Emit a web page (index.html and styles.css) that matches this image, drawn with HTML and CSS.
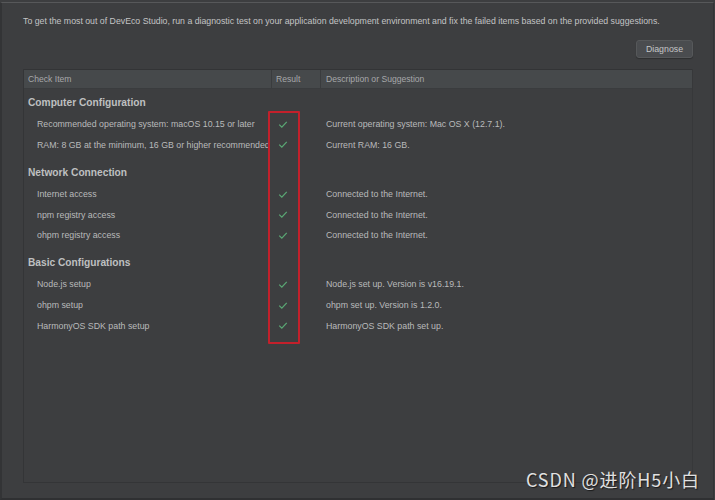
FILE: index.html
```html
<!DOCTYPE html>
<html>
<head>
<meta charset="utf-8">
<link rel="stylesheet" href="styles.css">
</head>
<body>
<div class="window">
  <p class="intro">To get the most out of DevEco Studio, run a diagnostic test on your application development environment and fix the failed items based on the provided suggestions.</p>
  <div class="toolbar"><button class="btn">Diagnose</button></div>
  <div class="table">
    <div class="thead">
      <div class="th">Check Item</div>
      <div class="th">Result</div>
      <div class="th">Description or Suggestion</div>
    </div>
    <div class="tbody">
      <div class="section">Computer Configuration</div>
      <div class="row"><div class="c1">Recommended operating system: macOS 10.15 or later</div><div class="c2"><svg class="chk" viewBox="0 0 12 10"><path d="M1.5 5.2 L4.6 8.2 L10.5 1.8"/></svg></div><div class="c3">Current operating system: Mac OS X (12.7.1).</div></div>
      <div class="row"><div class="c1">RAM: 8 GB at the minimum, 16 GB or higher recommended</div><div class="c2"><svg class="chk" viewBox="0 0 12 10"><path d="M1.5 5.2 L4.6 8.2 L10.5 1.8"/></svg></div><div class="c3">Current RAM: 16 GB.</div></div>
      <div class="section">Network Connection</div>
      <div class="row"><div class="c1">Internet access</div><div class="c2"><svg class="chk" viewBox="0 0 12 10"><path d="M1.5 5.2 L4.6 8.2 L10.5 1.8"/></svg></div><div class="c3">Connected to the Internet.</div></div>
      <div class="row"><div class="c1">npm registry access</div><div class="c2"><svg class="chk" viewBox="0 0 12 10"><path d="M1.5 5.2 L4.6 8.2 L10.5 1.8"/></svg></div><div class="c3">Connected to the Internet.</div></div>
      <div class="row"><div class="c1">ohpm registry access</div><div class="c2"><svg class="chk" viewBox="0 0 12 10"><path d="M1.5 5.2 L4.6 8.2 L10.5 1.8"/></svg></div><div class="c3">Connected to the Internet.</div></div>
      <div class="section">Basic Configurations</div>
      <div class="row"><div class="c1">Node.js setup</div><div class="c2"><svg class="chk" viewBox="0 0 12 10"><path d="M1.5 5.2 L4.6 8.2 L10.5 1.8"/></svg></div><div class="c3">Node.js set up. Version is v16.19.1.</div></div>
      <div class="row"><div class="c1">ohpm setup</div><div class="c2"><svg class="chk" viewBox="0 0 12 10"><path d="M1.5 5.2 L4.6 8.2 L10.5 1.8"/></svg></div><div class="c3">ohpm set up. Version is 1.2.0.</div></div>
      <div class="row"><div class="c1">HarmonyOS SDK path setup</div><div class="c2"><svg class="chk" viewBox="0 0 12 10"><path d="M1.5 5.2 L4.6 8.2 L10.5 1.8"/></svg></div><div class="c3">HarmonyOS SDK path set up.</div></div>
      <div class="highlight"></div>
    </div>
  </div>
  <div class="watermark">CSDN @进阶H5小白</div>
</div>
</body>
</html>
```

FILE: styles.css
```css
html, body {
  margin: 0;
  padding: 0;
  background: #3d3e40;
}
body {
  width: 715px;
  height: 500px;
  overflow: hidden;
  font-family: "Liberation Sans", Arial, sans-serif;
}
.window {
  position: relative;
  box-sizing: border-box;
  width: 714px;
  height: 498px;
  margin-top: 2px;
  border-top: 1px solid #57585a;
  border-left: 2px solid #333436;
  border-right: 1px solid #333436;
  border-bottom: 2px solid #2f3032;
  background: #3d3e40;
  padding: 0 20px 0 21px;
  display: flex;
  flex-direction: column;
}
.intro {
  margin: 12px 0 0 0;
  font-size: 8.75px;
  line-height: 12px;
  color: #c3c4c5;
  white-space: nowrap;
}
.toolbar {
  display: flex;
  justify-content: flex-end;
  margin-top: 13px;
}
.btn {
  box-sizing: border-box;
  width: 57px;
  height: 18px;
  padding: 0;
  border: 1px solid #56585a;
  border-radius: 3px;
  background: #4a4c4f;
  color: #c4c5c6;
  font-family: "Liberation Sans", Arial, sans-serif;
  font-size: 8.8px;
  box-shadow: 0 1px 1px rgba(0,0,0,0.25);
}
.table {
  margin-top: 11px;
  flex: 1;
  margin-bottom: 15px;
  display: flex;
  flex-direction: column;
  border-left: 1px solid #343537;
  border-right: 1px solid #37383a;
  border-bottom: 1px solid #343537;
}
.thead {
  display: grid;
  grid-template-columns: 248px 49px 1fr;
  height: 20px;
  background: #46494b;
  border-top: 1px solid #333436;
  border-bottom: 1px solid #3a3c3e;
  box-sizing: border-box;
}
.th {
  font-size: 8.6px;
  color: #a6a8aa;
  line-height: 19px;
  padding-left: 4px;
  border-right: 1px solid #3a3c3e;
  white-space: nowrap;
}
.th:last-child { border-right: none; padding-left: 5px; }
.tbody {
  position: relative;
  padding-top: 1px;
}
.section {
  font-size: 10.2px;
  font-weight: bold;
  color: #bfc0c1;
  height: 24px;
  line-height: 26px;
  padding-left: 4px;
}
.row {
  display: grid;
  grid-template-columns: 248px 49px 1fr;
  height: 20.6px;
  align-items: center;
  font-size: 8.8px;
  color: #b9babb;
}
.row + .section { margin-top: 4.6px; }
.c1 { padding-left: 13px; white-space: nowrap; }
.c2 { display: flex; padding-left: 6px; }
.c3 { padding-left: 5px; white-space: nowrap; }
.chk {
  width: 10px;
  height: 9px;
  fill: none;
  stroke: #5aa774;
  stroke-width: 1.5;
}
.highlight {
  position: absolute;
  left: 244px;
  top: 22px;
  width: 28px;
  height: 229px;
  border: 2px solid #c3202b;
  border-radius: 1px;
}
.watermark {
  position: absolute;
  right: 13px;
  bottom: 6px;
  font-family: "Noto Sans CJK SC", "Liberation Sans", sans-serif;
  font-size: 18px;
  color: #e0e0e0;
  text-shadow: 1px 1px 1px rgba(0,0,0,0.6);
  letter-spacing: 0.9px;
}
```
